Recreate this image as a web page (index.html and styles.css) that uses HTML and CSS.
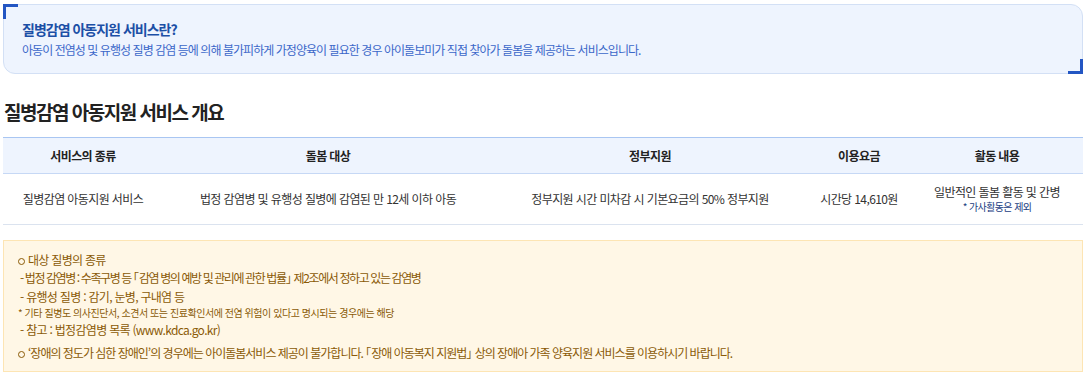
FILE: index.html
```html
<!DOCTYPE html>
<html lang="ko">
<head>
<meta charset="utf-8">
<link rel="stylesheet" href="styles.css">
</head>
<body>
<div class="page">
  <div class="intro">
    <span class="corner corner-tl"></span>
    <span class="corner corner-br"></span>
    <h3 class="intro-title">질병감염 아동지원 서비스란?</h3>
    <p class="intro-text">아동이 전염성 및 유행성 질병 감염 등에 의해 불가피하게 가정양육이 필요한 경우 아이돌보미가 직접 찾아가 돌봄을 제공하는 서비스입니다.</p>
  </div>

  <h2 class="section-title">질병감염 아동지원 서비스 개요</h2>

  <table class="overview">
    <colgroup>
      <col class="c1"><col class="c2"><col class="c3"><col class="c4"><col class="c5">
    </colgroup>
    <thead>
      <tr>
        <th>서비스의 종류</th>
        <th>돌봄 대상</th>
        <th>정부지원</th>
        <th>이용요금</th>
        <th>활동 내용</th>
      </tr>
    </thead>
    <tbody>
      <tr>
        <td>질병감염 아동지원 서비스</td>
        <td>법정 감염병 및 유행성 질병에 감염된 만 12세 이하 아동</td>
        <td>정부지원 시간 미차감 시 기본요금의 50% 정부지원</td>
        <td>시간당 14,610원</td>
        <td>일반적인 돌봄 활동 및 간병<span class="note">* 가사활동은 제외</span></td>
      </tr>
    </tbody>
  </table>

  <div class="notice">
    <p class="bullet l1">대상 질병의 종류</p>
    <p class="dash l2">- 법정 감염병 : 수족구병 등 <span class="br">「</span>감염 병의 예방 및 관리에 관한 법률<span class="br">」</span> 제2조에서 정하고 있는 감염병</p>
    <p class="dash l3">- 유행성 질병 : 감기, 눈병, 구내염 등</p>
    <p class="small l4">* 기타 질병도 의사진단서, 소견서 또는 진료확인서에 전염 위험이 있다고 명시되는 경우에는 해당</p>
    <p class="dash l5">- 참고 : 법정감염병 목록 (www.kdca.go.kr)</p>
    <p class="bullet l6">‘장애의 정도가 심한 장애인’의 경우에는 아이돌봄서비스 제공이 불가합니다. <span class="br">「</span>장애 아동복지 지원법<span class="br">」</span> 상의 장애아 가족 양육지원 서비스를 이용하시기 바랍니다.</p>
  </div>
</div>
</body>
</html>
```

FILE: styles.css
```css
* { box-sizing: border-box; }
html, body { margin: 0; padding: 0; background: #fff; }
body {
  font-family: "Noto Sans CJK KR", "Noto Sans", sans-serif;
  color: #333;
  letter-spacing: -0.6px;
}
.page { padding: 4px 8px 0 3px; }

.intro {
  position: relative;
  background: #eef4fe;
  border: 1px solid #d3e0f5;
  border-radius: 0 12px 0 12px;
  height: 70px;
  padding: 14px 18px 0 18px;
}
.corner {
  position: absolute;
  width: 15px;
  height: 15px;
  border-color: #2356c3;
  border-style: solid;
}
.corner-tl { top: -1px; left: -1px; border-width: 3px 0 0 3px; }
.corner-br { bottom: -1px; right: -1px; border-width: 0 3px 3px 0; }
.intro-title {
  margin: 0;
  font-size: 14px;
  line-height: 20px;
  font-weight: 700;
  color: #1c4fa6;
  letter-spacing: -1px;
}
.intro-text {
  margin: 2px 0 0;
  font-size: 12px;
  line-height: 18px;
  color: #3b67c9;
  letter-spacing: -0.95px;
}

.section-title {
  margin: 24px 0 0 1px;
  font-size: 19px;
  line-height: 28px;
  font-weight: 700;
  color: #222;
  letter-spacing: -1.5px;
}

.overview {
  width: 100%;
  margin-top: 11px;
  border-collapse: collapse;
  table-layout: fixed;
  font-size: 12px;
}
.c1 { width: 160px; }
.c2 { width: 330px; }
.c3 { width: 314px; }
.c4 { width: 104px; }
.c5 { width: auto; }
.overview th {
  background: #eef4fe;
  border-top: 1px solid #a9c6f2;
  border-bottom: 1px solid #c6d8f5;
  height: 36px;
  font-weight: 700;
  color: #222;
  padding: 0;
}
.overview td {
  border-bottom: 1px solid #dbe3ef;
  height: 51px;
  text-align: center;
  color: #333;
  padding: 0;
  line-height: 16px;
}
.note {
  display: block;
  font-size: 10px;
  line-height: 14px;
  color: #1a3d82;
}

.notice {
  margin-top: 15px;
  background: #fff7e6;
  border: 1px solid #fde5b4;
  height: 132px;
  padding: 10px 14px 0 14px;
  font-size: 12px;
  color: #8a5a06;
  letter-spacing: -0.7px;
}
.notice p { margin: 0; line-height: 18px; }
.notice .bullet::before {
  content: "";
  display: inline-block;
  width: 5px;
  height: 5px;
  border: 1px solid currentColor;
  border-radius: 50%;
  margin: 0 3px 1px 0;
  vertical-align: middle;
}
.br { font-feature-settings: "halt" 1; letter-spacing: 0; }
.notice .dash { padding-left: 2px; }
.notice .small { font-size: 10px; letter-spacing: -0.45px; }
.notice .l1 { line-height: 18px; }
.notice .l2 { line-height: 18px; letter-spacing: -1.4px; }
.notice .l3 { line-height: 19px; }
.notice .l4 { line-height: 14px; }
.notice .l5 { line-height: 20px; }
.notice .l6 { line-height: 18px; margin-top: 4px; letter-spacing: -1px; }
```
